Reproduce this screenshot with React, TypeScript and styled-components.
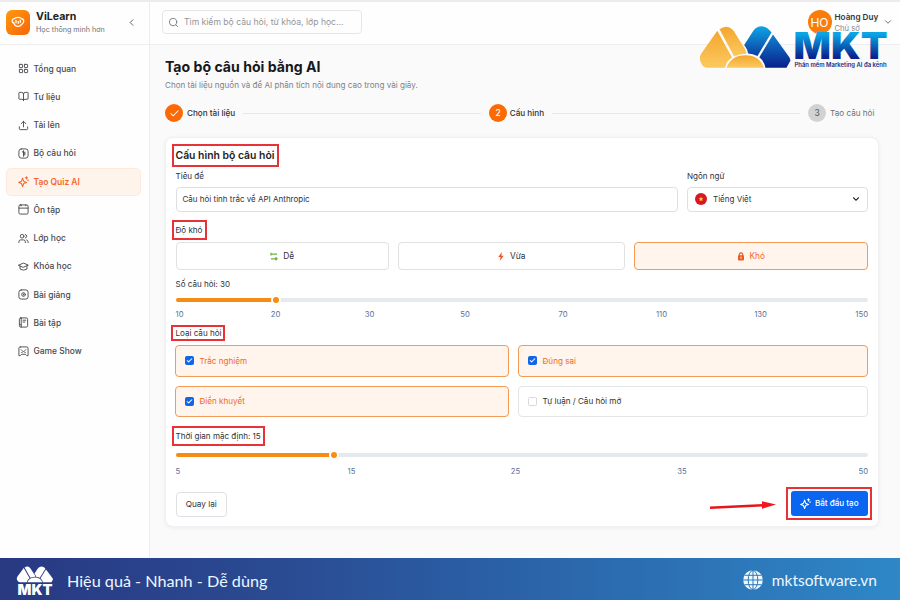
import React from "react";
import styled, { createGlobalStyle, css } from "styled-components";
import {
  BookOpen,
  Check,
  ChevronDown,
  ChevronLeft,
  GraduationCap,
  LayoutGrid,
  Search,
  Upload,
  Users,
} from "lucide-react";

const GlobalStyle = createGlobalStyle`
  * { box-sizing: border-box; }
  body { margin: 0; background: #fff; font-family: Inter, "Noto Sans", sans-serif; }
  button, input { font: inherit; }
`;

const Page = styled.div`
  position: relative;
  width: 900px;
  height: 600px;
  display: flex;
  flex-direction: column;
  overflow: hidden;
  color: #2b2d33;
  background: #fff;
  border-top: 2px solid #ececec;
`;

const Workspace = styled.div`
  display: flex;
  height: 556px;
`;

const Sidebar = styled.aside`
  width: 150px;
  flex: none;
  background: #fefefe;
  border-right: 1px solid #ededee;
`;

const Brand = styled.div`
  height: 43px;
  padding: 0 12px 2px 6px;
  display: flex;
  align-items: center;
  border-bottom: 1px solid #eeeeef;
`;

const BrandMark = styled.div`
  width: 24px;
  height: 25px;
  border-radius: 6px;
  display: grid;
  place-items: center;
  background: linear-gradient(135deg, #ff9a0c, #f96508);
`;

const BrandText = styled.div`
  flex: 1;
  margin-left: 6px;
`;

const BrandName = styled.div`
  font-size: 10.6px;
  line-height: 13px;
  font-weight: 700;
  color: #222327;
`;

const BrandTagline = styled.div`
  margin-top: 1px;
  font-size: 7.2px;
  line-height: 11px;
  color: #6e7076;
  white-space: nowrap;
`;

const Nav = styled.nav`
  padding: 9.5px 8px 0 6px;
`;

const NavItem = styled.a<{ $active?: boolean }>`
  height: 28.25px;
  padding-left: 10.500px;
  display: flex;
  align-items: center;
  gap: 5px;
  border-radius: 5px;
  font-size: 8.45px;
  font-weight: 500;
  color: #46484d;
  border: 1px solid transparent;
  ${(p) =>
    p.$active &&
    css`
      color: #f4672c;
      background: #fff4ec;
      border-color: #fdeadd;
      font-weight: 600;
    `}
  svg { width: 11px; height: 11px; flex: none; }
`;

const Main = styled.main`
  flex: 1;
  min-width: 0;
  background: #fafafa;
`;

const Topbar = styled.header`
  height: 43px;
  padding: 0 7.5px 2px 12px;
  display: flex;
  align-items: center;
  justify-content: space-between;
  background: #fefefe;
  border-bottom: 1px solid #eeeeef;
`;

const SearchBox = styled.label`
  width: 200px;
  height: 24px;
  padding: 0 5px;
  display: flex;
  align-items: center;
  gap: 5px;
  border: 1px solid #e6e6e8;
  border-radius: 4px;
  color: #77797f;
  font-size: 8.6px;
  span { color: #929499; white-space: nowrap; }
`;

const Account = styled.div`
  display: flex;
  align-items: center;
`;

const Avatar = styled.div`
  width: 24px;
  height: 24px;
  border-radius: 50%;
  display: grid;
  place-items: center;
  background: #fa7d0a;
  color: #fff;
  font-size: 12px;
`;

const AccountText = styled.div`
  width: 48px;
  margin: 2px 0 0 3px;
  font-size: 8.2px;
  line-height: 10.5px;
  white-space: nowrap;
  strong { display: block; font-weight: 600; color: #34363c; }
  span { color: #85878c; font-size: 7.6px; }
`;

const Content = styled.div`
  padding: 13px 21.5px 0 15px;
`;

const Title = styled.h1`
  margin: 0;
  font-size: 14.1px;
  line-height: 18px;
  font-weight: 700;
  color: #17181b;
`;

const Subtitle = styled.p`
  margin: 3px 0 0;
  font-size: 8.1px;
  line-height: 12px;
  color: #7e8086;
`;

const Stepper = styled.div`
  display: flex;
  align-items: center;
  height: 20px;
  margin-top: 12px;
  padding-right: 4px;
`;

const Step = styled.div<{ $muted?: boolean; $tight?: boolean }>`
  flex: none;
  display: flex;
  align-items: center;
  gap: ${(p) => (p.$tight ? 2.5 : 4)}px;
  font-size: 8.15px;
  font-weight: ${(p) => (p.$muted ? 400 : 500)};
  color: ${(p) => (p.$muted ? "#6f7176" : "#2f3136")};
  white-space: nowrap;
`;

const StepDot = styled.span<{ $muted?: boolean }>`
  width: 18px;
  height: 18px;
  border-radius: 50%;
  display: grid;
  place-items: center;
  font-size: 8.5px;
  font-weight: 500;
  background: ${(p) => (p.$muted ? "#d2d2d3" : "#fc6a05")};
  color: ${(p) => (p.$muted ? "#606266" : "#fff")};
`;

const StepLine = styled.span<{ $w: number }>`
  width: ${(p) => p.$w}px;
  height: 1px;
  margin: 0 8px;
  background: #e8e8e8;
`;

const Card = styled.section`
  height: 390px;
  margin-top: 14px;
  padding: 8.5px 9.5px 0;
  display: flex;
  flex-direction: column;
  background: #fff;
  border: 1px solid #f1f1f4;
  border-radius: 8px;
  box-shadow: 0 1px 4px rgba(40, 50, 90, 0.07);
`;

const Marked = styled.span<{ $box?: string }>`
  position: relative;
  &::after {
    content: "";
    position: absolute;
    inset: ${(p) => p.$box};
    border: 2px solid #e93237;
    pointer-events: none;
  }
`;

const CardTitle = styled.h2`
  margin: 0;
  height: 17px;
  font-size: 10.4px;
  line-height: 17px;
  font-weight: 600;
  color: #1d1e22;
`;

const Label = styled.div<{ $top: number }>`
  height: 12px;
  margin-top: ${(p) => p.$top}px;
  line-height: 12px;
  font-size: 8.05px;
  color: #303238;
`;

const Fields = styled.div`
  display: grid;
  grid-template-columns: 502.5px 180.5px;
  gap: 0 9px;
`;

const Control = styled.div`
  height: 25px;
  margin-top: 4.5px;
  padding: 0 6px;
  display: flex;
  align-items: center;
  border: 1px solid #dedfe2;
  border-radius: 4px;
  font-size: 8px;
  color: #303238;
`;

const Flag = styled.svg`
  width: 12px;
  height: 12px;
  margin: 0 6px 0 1px;
`;

const Grow = styled.span`
  flex: 1;
`;

const Levels = styled.div`
  display: grid;
  grid-template-columns: 213.5px 227.5px 234.5px;
  gap: 8.5px;
  margin-top: 6px;
`;

const Choice = styled.button<{ $on?: boolean }>`
  height: 28px;
  padding: 0;
  display: flex;
  align-items: center;
  justify-content: center;
  gap: 5px;
  border-radius: 4px;
  border: 1px solid ${(p) => (p.$on ? "#f29a56" : "#e0e1e3")};
  background: ${(p) => (p.$on ? "#fff5ed" : "#fff")};
  color: ${(p) => (p.$on ? "#f2691f" : "#303238")};
  font-size: 8.3px;
  svg { width: 8px; height: 9px; }
`;

const Track = styled.div`
  height: 4px;
  display: flex;
  align-items: center;
  border-radius: 2px;
  background: #e6e9ef;
`;

const TrackFill = styled.div`
  height: 4px;
  border-radius: 2px 0 0 2px;
  background: #f68d12;
`;

const Thumb = styled.div`
  width: 10px;
  height: 10px;
  flex: none;
  margin-left: -1px;
  border-radius: 50%;
  border: 2px solid #fff;
  background: #f68d12;
  box-shadow: 0 0 1px rgba(240, 150, 60, 0.25);
`;

const Ticks = styled.div<{ $cols: string }>`
  display: grid;
  grid-template-columns: ${(p) => p.$cols};
  height: 12px;
  line-height: 12px;
  font-size: 7.7px;
  color: #5b7196;
  text-align: center;
  span:first-child { text-align: left; }
  span:last-child { text-align: right; }
`;

const Kinds = styled.div`
  display: grid;
  grid-template-columns: 334.5px 350.5px;
  gap: 9px 8.5px;
  margin: 6px -1px 0;
`;

const Kind = styled.label<{ $on?: boolean }>`
  height: 31.5px;
  padding-left: 9px;
  display: flex;
  align-items: center;
  gap: 6px;
  border-radius: 4px;
  border: 1px solid ${(p) => (p.$on ? "#f29a56" : "#e4e5e7")};
  background: ${(p) => (p.$on ? "#fff5ed" : "#fff")};
  color: ${(p) => (p.$on ? "#f2691f" : "#303238")};
  font-size: 8.1px;
`;

const Box = styled.span<{ $on?: boolean }>`
  width: 9px;
  height: 9px;
  display: grid;
  place-items: center;
  border-radius: 1.5px;
  border: 1px solid ${(p) => (p.$on ? "#1166e8" : "#d8d9dc")};
  background: ${(p) => (p.$on ? "#1166e8" : "#fff")};
  color: #fff;
`;

const Actions = styled.div`
  display: flex;
  justify-content: space-between;
  margin-top: 14px;
`;

const BackButton = styled.button`
  width: 51.5px;
  height: 25px;
  padding: 0;
  border: 1px solid #dfe0e3;
  border-radius: 4px;
  background: #fff;
  color: #303238;
  font-size: 8.2px;
`;

const StartWrap = styled(Marked)`
  height: 24px;
  margin-top: -1px;
`;

const StartButton = styled.button`
  width: 77.5px;
  height: 25px;
  padding: 0;
  display: flex;
  align-items: center;
  justify-content: center;
  gap: 4px;
  border: 0;
  border-radius: 3px;
  background: #0a66f0;
  color: #fff;
  font-size: 8.1px;
  font-weight: 500;
`;

const Arrow = styled.svg`
  position: absolute;
  left: -82px;
  top: 7px;
  width: 68px;
  height: 12px;
`;

const Watermark = styled.svg`
  position: absolute;
  left: 698px;
  top: 20px;
  width: 192px;
  height: 50px;
`;

const Footer = styled.footer`
  height: 42px;
  flex: none;
  padding: 2px 23px 0 16px;
  display: flex;
  align-items: center;
  background: linear-gradient(90deg, #283982 0%, #2a4a92 30%, #2b66ab 62%, #2e87c6 100%);
  color: #eef7ff;
  font-family: Lato, "Noto Sans", sans-serif;
  white-space: nowrap;
`;

const Slogan = styled.span`
  flex: 1;
  margin-left: 13px;
  font-size: 16.2px;
`;

const Site = styled.span`
  margin-left: 9px;
  font-size: 15.5px;
`;

type IconProps = { children: React.ReactNode; box?: string; w?: number };
const Line = ({ children, box = "0 0 24 24", w = 2 }: IconProps) => (
  <svg
    viewBox={box}
    width="11"
    height="11"
    fill="none"
    stroke="currentColor"
    strokeWidth={w}
    strokeLinecap="round"
    strokeLinejoin="round"
  >
    {children}
  </svg>
);

const Sparkle = () => (
  <Line w={2.3}>
    <path d="M10 4.500 L12.300 11.300 L18.500 14 L12.300 16.500 L10 23 L7.500 16.500 L1.500 14 L7.500 11.300 Z" />
    <path d="M18.500 1.500v5M16 4h5" />
    <circle cx="22" cy="9" r="0.6" />
  </Line>
);

const nav = [
  { text: "Tổng quan", icon: <LayoutGrid /> },
  { text: "Tư liệu", icon: <BookOpen /> },
  { text: "Tải lên", icon: <Upload /> },
  {
    text: "Bộ câu hỏi",
    icon: (
      <Line>
        <rect x="2" y="2" width="20" height="20" rx="5" />
        <path d="M12 6v12M9 8.500h4v7M15 9v6" />
      </Line>
    ),
  },
  { text: "Tạo Quiz AI", icon: <Sparkle />, active: true },
  {
    text: "Ôn tập",
    icon: (
      <Line>
        <rect x="2" y="2" width="20" height="20" rx="3" />
        <path d="M2 9h20M7 2v2M17 2v2" />
      </Line>
    ),
  },
  { text: "Lớp học", icon: <Users /> },
  {
    text: "Khóa học",
    icon: (
      <Line>
        <path d="M1.500 9L12 4.500L22.500 9L12 13.500ZM4.500 11v6.500Q12 22.500 19.500 17.500V11" />
      </Line>
    ),
  },
  {
    text: "Bài giảng",
    icon: (
      <Line>
        <rect x="2" y="2" width="20" height="20" rx="5" />
        <circle cx="12" cy="12" r="4" />
        <path d="M12 11v2" />
      </Line>
    ),
  },
  {
    text: "Bài tập",
    icon: (
      <Line>
        <rect x="3" y="2" width="18" height="20" rx="3" />
        <path d="M7 2v20M11 7h6M11 11h4M4 17h3" />
      </Line>
    ),
  },
  {
    text: "Game Show",
    icon: (
      <Line>
        <path d="M5 2h14a3 3 0 0 1 3 3v16h-3l-3-3H8l-3 3H2V5a3 3 0 0 1 3-3Z" />
        <path d="M7 8l2 2M17 8l-2 2M8 14l4-2 4 2" />
      </Line>
    ),
  },
];

const kinds = [
  { text: "Trắc nghiệm", on: true },
  { text: "Đúng sai", on: true },
  { text: "Điền khuyết", on: true },
  { text: "Tự luận / Câu hỏi mở", on: false },
];

const Peaks = ({ left, right, mid, sun }: { left: string; right: string; mid: string; sun: string }) => (
  <>
    <path fill={left} d="M19.300 8.700 L3.300 31.500 Q1 35.500 2.500 39.500 Q4.500 45.700 9 45.700 H27 Q28.500 39 34 35.600 Z" />
    <path fill={left} d="M21.500 7.300 Q28.500 1.800 35.300 8.200 L47.300 27.500 L48.500 31.700 Q41.500 31.700 36 34.200 Z" />
    <path fill={mid} d="M47.800 20.500 L55.500 8.500 Q61.500 1.700 69 6 Q71.500 7.500 73.500 10.500 L59.500 34 Q54.500 31.800 50.200 31.600 L49 27.500 L46.200 23 Z" />
    <path fill={right} d="M75 12.500 L91.500 35.500 L92.500 38.500 L88.500 45.700 H67.500 Q66 38.800 61.300 35.300 Z" />
    <path fill={sun} d="M28.500 45.700 Q33 33.200 47.500 33.200 Q61.500 33.200 66 45.700 Z" />
  </>
);

export default function App() {
  return (
    <>
      <GlobalStyle />
      <Page>
        <Workspace>
          <Sidebar>
            <Brand>
              <BrandMark>
                <svg width="14" height="12" viewBox="0 0 14 12" fill="none" stroke="#fff" strokeWidth="1.300">
                  <path d="M1.200 4.200 Q1.200 2.900 2.900 2.900 Q4.600 1.300 7 1.300 Q9.800 1.300 11 3 Q12.900 3.100 12.700 5.200 Q12.600 7.300 10.900 8.100 Q9.500 10.300 7 10.300 Q3.600 10.300 3 7.200 Q1.100 6.500 1.200 4.200 Z" />
                  <path d="M5 4v3.300M7.300 5v2.800M9.300 3.700v3" />
                </svg>
              </BrandMark>
              <BrandText>
                <BrandName>ViLearn</BrandName>
                <BrandTagline>Học thông minh hơn</BrandTagline>
              </BrandText>
              <ChevronLeft size={11} color="#55575c" />
            </Brand>
            <Nav>
              {nav.map((n) => (
                <NavItem key={n.text} $active={n.active}>
                  {n.icon}
                  {n.text}
                </NavItem>
              ))}
            </Nav>
          </Sidebar>
          <Main>
            <Topbar>
              <SearchBox>
                <Search size={11} />
                <span>Tìm kiếm bộ câu hỏi, từ khóa, lớp học...</span>
              </SearchBox>
              <Account>
                <Avatar>HO</Avatar>
                <AccountText>
                  <strong>Hoàng Duy</strong>
                  <span>Chủ sở</span>
                </AccountText>
                <ChevronDown size={10} color="#55575c" />
              </Account>
            </Topbar>
            <Content>
              <Title>Tạo bộ câu hỏi bằng AI</Title>
              <Subtitle>Chọn tài liệu nguồn và để AI phân tích nội dung cao trong vài giây.</Subtitle>
              <Stepper>
                <Step>
                  <StepDot>
                    <Check size={11} strokeWidth={2.2} />
                  </StepDot>
                  Chọn tài liệu
                </Step>
                <StepLine $w={238} />
                <Step $tight>
                  <StepDot>2</StepDot>
                  Cấu hình
                </Step>
                <StepLine $w={248} />
                <Step $muted>
                  <StepDot $muted>3</StepDot>
                  Tạo câu hỏi
                </Step>
              </Stepper>
              <Card>
                <CardTitle>
                  <Marked $box="-5px -5px -5px -4px">Cấu hình bộ câu hỏi</Marked>
                </CardTitle>
                <Fields>
                  <div>
                    <Label $top={6.5}>Tiêu đề</Label>
                    <Control>Câu hỏi tinh trắc về API Anthropic</Control>
                  </div>
                  <div>
                    <Label $top={6.5}>Ngôn ngữ</Label>
                    <Control>
                      <Flag viewBox="0 0 12 12">
                        <circle cx="6" cy="6" r="6" fill="#d91627" />
                        <path
                          fill="#ffd83b"
                          d="M6 3.500l.65 1.700 1.800.1-1.400 1.100.5 1.750L6 7.200l-1.550.95.5-1.750-1.400-1.100 1.800-.1z"
                        />
                      </Flag>
                      <Grow>Tiếng Việt</Grow>
                      <ChevronDown size={10} strokeWidth={2.6} />
                    </Control>
                  </div>
                </Fields>
                <Label $top={12.5}>
                  <Marked $box="-5px -5px -5px -4px">Độ khó</Marked>
                </Label>
                <Levels>
                  <Choice>
                    <svg viewBox="0 0 8 9" stroke="#69b53a" strokeWidth="1.300" fill="none">
                      <path d="M7 2.200H1M1 .8v2.800M1 6.800h6M5.500 5.300L7 6.800 5.500 8.300" />
                    </svg>
                    Dễ
                  </Choice>
                  <Choice>
                    <svg viewBox="0 0 8 9" fill="#f2552c">
                      <path d="M4.800 0L1.300 5h2.200L2.800 9 6.700 3.800H4.400z" />
                    </svg>
                    Vừa
                  </Choice>
                  <Choice $on>
                    <svg viewBox="0 0 8 9">
                      <path d="M2.300 4V2.300Q2.400.8 4 .8T5.700 2.300V4" fill="none" stroke="#ee5a1c" strokeWidth="1.200" />
                      <rect x="1" y="3.200" width="6" height="5.300" rx="1" fill="#ee5a1c" />
                      <path d="M4 4.600v2.200" stroke="#fff" strokeWidth=".9" />
                    </svg>
                    Khó
                  </Choice>
                </Levels>
                <Label $top={7.5}>Số câu hỏi: 30</Label>
                <Slider value={96} />
                <TickRow cols="53px 94px 94px 97px 99px 98px 100px 1fr" values={[10, 20, 30, 50, 70, 110, 130, 150]} />
                <Label $top={6}>
                  <Marked $box="-3px -4px -3px -5px">Loại câu hỏi</Marked>
                </Label>
                <Kinds>
                  {kinds.map((k) => (
                    <Kind key={k.text} $on={k.on}>
                      <Box $on={k.on}>{k.on && <Check size={7} strokeWidth={3.5} />}</Box>
                      {k.text}
                    </Kind>
                  ))}
                </Kinds>
                <Label $top={12.5}>
                  <Marked $box="-5px -4px -5px -4px">Thời gian mặc định: 15</Marked>
                </Label>
                <Slider value={154.5} late />
                <TickRow cols="94px 164px 164px 169px 1fr" values={[5, 15, 25, 35, 50]} />
                <Actions>
                  <BackButton>Quay lại</BackButton>
                  <StartWrap $box="-4px -4px -5px -5px">
                    <StartButton>
                      <Sparkle />
                      Bắt đầu tạo
                    </StartButton>
                    <Arrow viewBox="0 0 68 12">
                      <path d="M1 9.800L54 7.200" stroke="#e5161d" strokeWidth="2.400" />
                      <path d="M53 3.200L67 6.500L53 10.800Z" fill="#f3161d" />
                    </Arrow>
                  </StartWrap>
                </Actions>
              </Card>
            </Content>
          </Main>
        </Workspace>
        <Footer>
          <svg width="38" height="32" viewBox="0 0 38 32">
            <g transform="scale(.4 .38) translate(0 2)">
              <Peaks left="#fff" right="#fff" mid="#fff" sun="#fff" />
            </g>
            <text x="1.500" y="30.500" textLength="35" lengthAdjust="spacingAndGlyphs" fontFamily="Inter" fontSize="14" fontWeight="900" fill="#fff">
              MKT
            </text>
          </svg>
          <Slogan>Hiệu quả - Nhanh - Dễ dùng</Slogan>
          <svg width="20" height="20" viewBox="0 0 20 20" fill="none" stroke="#2d78b9" strokeWidth="1">
            <circle cx="10" cy="10" r="9.800" fill="#eef7ff" stroke="none" />
            <ellipse cx="10" cy="10" rx="4.800" ry="9.500" />
            <path d="M10 0v20M0 10h20M1.500 5.300h17M1.500 14.700h17" />
          </svg>
          <Site>mktsoftware.vn</Site>
        </Footer>
        <Watermark viewBox="0 0 192 50">
          <defs>
            <linearGradient id="gold" x1="0" y1="0" x2="0" y2="1">
              <stop offset="0" stopColor="#f5a62c" />
              <stop offset="1" stopColor="#fbc95f" />
            </linearGradient>
            <linearGradient id="sky" x1="0" y1="0" x2="0" y2="1">
              <stop offset="0" stopColor="#0ea5e6" />
              <stop offset="1" stopColor="#0c3f9e" />
            </linearGradient>
            <linearGradient id="deep" x1="0" y1="0" x2="0" y2="1">
              <stop offset="0" stopColor="#1081d0" />
              <stop offset="1" stopColor="#08208c" />
            </linearGradient>
            <linearGradient id="word" x1="0" y1="0" x2="0" y2="1">
              <stop offset=".25" stopColor="#0ba4e4" />
              <stop offset=".75" stopColor="#0a2590" />
            </linearGradient>
          </defs>
          <Peaks left="url(#gold)" right="url(#deep)" mid="url(#sky)" sun="url(#gold)" />
          <text x="95.500" y="37" textLength="94" lengthAdjust="spacingAndGlyphs" fontFamily="Inter" fontSize="37" fontWeight="900" fill="url(#word)">
            MKT
          </text>
          <text x="96.500" y="45" textLength="92" lengthAdjust="spacingAndGlyphs" fontFamily="Inter" fontSize="5.500" fontWeight="600" fill="#172a82">
            Phần mềm Marketing AI đa kênh
          </text>
        </Watermark>
      </Page>
    </>
  );
}

const TrackSlot = styled.div<{ $late?: boolean }>`
  margin: ${(p) => (p.$late ? "11px 0 9px" : "8.5px 0 7px")};
`;

function Slider({ value, late }: { value: number; late?: boolean }) {
  return (
    <TrackSlot $late={late}>
      <Track>
        <TrackFill style={{ width: value }} />
        <Thumb />
      </Track>
    </TrackSlot>
  );
}

function TickRow({ cols, values }: { cols: string; values: number[] }) {
  return (
    <Ticks $cols={cols}>
      {values.map((v) => (
        <span key={v}>{v}</span>
      ))}
    </Ticks>
  );
}
